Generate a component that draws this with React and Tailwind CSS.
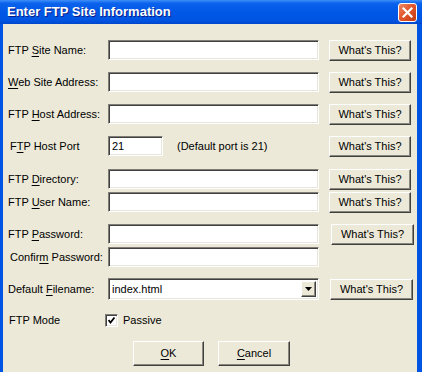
import React from 'react';

const U = ({ children }) => (
  <span className="underline decoration-1 underline-offset-[2px]">{children}</span>
);

const Field = ({ className = 'w-[211px]', children }) => (
  <div
    className={`${className} h-[20px] bg-white border border-t-[#7f7d76] border-l-[#7f7d76] border-r-white border-b-white shadow-[inset_1px_1px_0_#404040,inset_-1px_-1px_0_#e8e6dc] flex items-center pl-[3px]`}
  >
    {children}
  </div>
);

const Btn = ({ className = '', children }) => (
  <button
    type="button"
    className={`${className} flex items-center justify-center bg-[#ece9d8] border border-t-white border-l-white border-r-[#404040] border-b-[#404040] shadow-[inset_-1px_-1px_0_#8a877c] text-black`}
  >
    {children}
  </button>
);

const WhatsThis = ({ className = 'ml-[10px] w-[82px]' }) => (
  <Btn className={`${className} h-[21px]`}>What's This?</Btn>
);

const Row = ({ label, className = '', labelClass = 'pl-[5px]', children }) => (
  <div className={`flex items-center h-[20px] ${className}`}>
    <div className={`w-[105px] shrink-0 ${labelClass}`}>{label}</div>
    {children}
  </div>
);

const App = () => {
  return (
    <div className="w-[422px] h-[372px] bg-[#0054e3] flex flex-col overflow-hidden font-[family-name:'Liberation_Sans',Arial,sans-serif] text-[11px] text-black">
      {/* Title bar */}
      <div className="h-[24px] shrink-0 flex items-center justify-between pl-[7px] pr-[5px] bg-[linear-gradient(180deg,#3d8ff7_0%,#0b62ec_14%,#0058e6_50%,#0054e2_85%,#0047cc_100%)]">
        <span className="text-white font-bold text-[13px] [text-shadow:1px_1px_0_#0a1e8a]">
          Enter FTP Site Information
        </span>
        <div className="w-[19px] h-[19px] rounded-[3px] border border-white bg-[linear-gradient(135deg,#ef8a66_0%,#e2572c_45%,#c63a12_100%)] flex items-center justify-center">
          <svg width="11" height="11" viewBox="0 0 11 11">
            <path d="M1.5 1.5 L9.5 9.5 M9.5 1.5 L1.5 9.5" stroke="white" strokeWidth="2.2" strokeLinecap="square" />
          </svg>
        </div>
      </div>

      {/* Body */}
      <div className="flex-1 ml-[3px] mr-[5px] bg-[#ece9d8] flex flex-col">
        <Row className="mt-[16px]" label={<>FTP <U>S</U>ite Name:</>}>
          <Field />
          <WhatsThis />
        </Row>

        <Row className="mt-[12px]" label={<><U>W</U>eb Site Address:</>}>
          <Field />
          <WhatsThis />
        </Row>

        <Row className="mt-[12px]" label={<>FTP <U>H</U>ost Address:</>}>
          <Field />
          <WhatsThis />
        </Row>

        <Row className="mt-[12px]" labelClass="pl-[7px]" label={<>F<U>T</U>P Host Port</>}>
          <div className="w-[211px] flex items-center">
            <Field className="w-[55px]">21</Field>
            <span className="ml-[14px]">(Default port is 21)</span>
          </div>
          <WhatsThis />
        </Row>

        <Row className="mt-[13px]" label={<>FTP <U>D</U>irectory:</>}>
          <Field />
          <WhatsThis />
        </Row>

        <Row className="mt-[3px]" label={<>FTP <U>U</U>ser Name:</>}>
          <Field />
          <WhatsThis />
        </Row>

        <Row className="mt-[12px]" label={<>FTP <U>P</U>assword:</>}>
          <Field />
          <WhatsThis className="ml-[12px] w-[83px]" />
        </Row>

        <Row className="mt-[3px]" labelClass="pl-[7px]" label={<>Confir<U>m</U> Password:</>}>
          <Field />
        </Row>

        <div className="flex items-center h-[22px] mt-[11px]">
          <div className="w-[105px] shrink-0 pl-[5px]">
            Default <U>F</U>ilename:
          </div>
          <div className="w-[211px] h-[22px] bg-white border border-t-[#7f7d76] border-l-[#7f7d76] border-r-white border-b-white shadow-[inset_1px_1px_0_#404040,inset_-1px_-1px_0_#e8e6dc] flex items-center justify-between pl-[3px] pr-[2px]">
            <span>index.html</span>
            <div className="w-[15px] h-[16px] bg-[#ece9d8] border border-t-white border-l-white border-r-[#404040] border-b-[#404040] shadow-[inset_-1px_-1px_0_#8a877c] flex items-center justify-center">
              <svg width="7" height="4" viewBox="0 0 7 4">
                <path d="M0 0 H7 L3.5 4 Z" fill="black" />
              </svg>
            </div>
          </div>
          <WhatsThis className="ml-[11px] w-[83px]" />
        </div>

        <div className="flex items-center h-[20px] mt-[10px]">
          <div className="w-[102px] shrink-0 pl-[6px]">FTP Mode</div>
          <div className="w-[13px] h-[13px] bg-white border border-t-[#7f7d76] border-l-[#7f7d76] border-r-white border-b-white shadow-[inset_1px_1px_0_#404040,inset_-1px_-1px_0_#e8e6dc] flex items-center justify-center">
            <svg width="7" height="7" viewBox="0 0 7 7">
              <path d="M0.5 3 L2.5 5.5 L6.5 0.5" stroke="black" strokeWidth="1.8" fill="none" />
            </svg>
          </div>
          <span className="ml-[5px]">Passive</span>
        </div>

        <div className="flex items-center mt-[11px] pl-[130px] gap-[14px]">
          <Btn className="w-[71px] h-[25px]">
            <U>O</U>K
          </Btn>
          <Btn className="w-[72px] h-[25px]">
            <U>C</U>ancel
          </Btn>
        </div>
      </div>
    </div>
  );
};

export default App;
